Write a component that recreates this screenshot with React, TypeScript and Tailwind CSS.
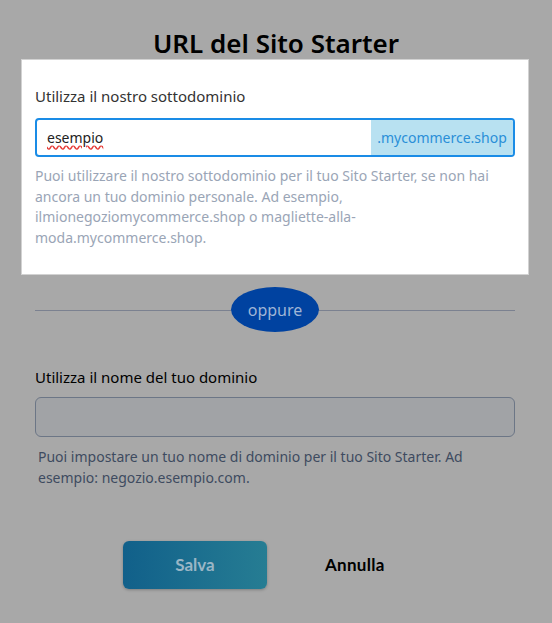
import React from "react";

const bodyFont = { fontFamily: '"Noto Sans", "Open Sans", sans-serif' };
const buttonFont = { fontFamily: 'Lato, "Open Sans", sans-serif' };

export default function App() {
	return (
		<div className="w-[552px] h-[623px] overflow-hidden bg-[#a8a8a8]" style={bodyFont}>
			<h1 className="pt-[27px] text-center text-[26px] leading-[32px] font-semibold text-black">URL del Sito Starter</h1>

			{/* highlighted step */}
			<div className="ml-[21px] w-[508px] bg-white border border-[#d2d2d2] px-[13px] pt-[26px] pb-[26px]">
				<div className="text-[15px] leading-[20px] text-[#333]">Utilizza il nostro sottodominio</div>
				<div className="mt-[12px] flex h-[39px] border-2 border-[#1a8ce6] rounded-[4px] overflow-hidden">
					<div className="flex-1 flex items-center pl-[10px] text-[14px] text-[#222]">
						<span className="underline decoration-wavy decoration-[#e53935] underline-offset-2">esempio</span>
					</div>
					<div className="w-[142px] flex items-center justify-center bg-[#b8e1f1] text-[14px] text-[#2a8fd8]">.mycommerce.shop</div>
				</div>
				<p className="mt-[9px] text-[14px] leading-[20.5px] text-[#9aa5b6] pr-[12px]">
					Puoi utilizzare il nostro sottodominio per il tuo Sito Starter, se non hai ancora un tuo dominio personale. Ad esempio, ilmionegoziomycommerce.shop o magliette-alla-moda.mycommerce.shop.
				</p>
			</div>

			<div className="ml-[35px] w-[480px]">
				<div className="relative flex items-center justify-center mt-[12px] h-[45px]">
					<div className="absolute left-0 right-0 top-1/2 h-px bg-[#7b8190]" />
					<div className="relative w-[88px] h-[45px] rounded-[50%] bg-[#0042a0] flex items-center justify-center text-[16px] text-[#9fb5d6]">oppure</div>
				</div>

				<div className="mt-[35px] text-[15px] leading-[20px] text-black">Utilizza il nome del tuo dominio</div>
				<div className="mt-[10px] h-[40px] rounded-[6px] border border-[#6c7686] bg-[#a1a3a6]" />
				<p className="mt-[9px] pl-[3px] text-[14px] leading-[21px] text-[#3e4b60]">
					Puoi impostare un tuo nome di dominio per il tuo Sito Starter. Ad esempio: negozio.esempio.com.
				</p>

				<div className="mt-[53px] flex items-center pl-[88px]" style={buttonFont}>
					<button className="w-[144px] h-[48px] rounded-[6px] bg-gradient-to-r from-[#11608a] to-[#267d93] shadow-[0_1px_3px_rgba(0,0,0,0.25)] text-[17px] font-bold text-[#9ab6c6]">
						Salva
					</button>
					<button className="ml-[58px] text-[17px] font-bold text-black tracking-[0.3px]">Annulla</button>
				</div>
			</div>
		</div>
	);
}
